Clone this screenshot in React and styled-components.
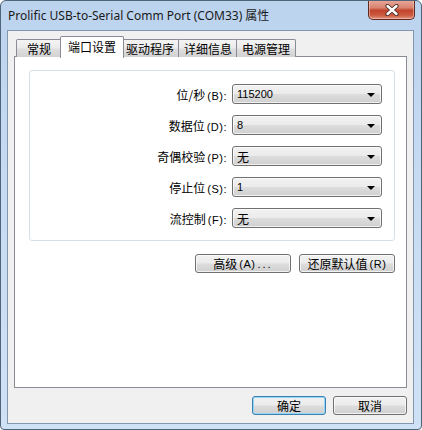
import React from 'react'
import styled, { createGlobalStyle, css } from 'styled-components'

const Global = createGlobalStyle`
  html, body {
    margin: 0;
    padding: 0;
    background: #ffffff;
    overflow: hidden;
  }
`

const cjk = `"Noto Sans CJK SC", "Noto Sans", sans-serif`

const Window = styled.div`
  width: 422px;
  height: 430px;
  box-sizing: border-box;
  border: 1px solid #4f6478;
  border-radius: 6px 6px 4px 4px;
  background: linear-gradient(180deg, #bcd3ee 0%, #c6dbf2 40%, #cfe1f5 100%);
  display: flex;
  flex-direction: column;
  overflow: hidden;
`

const TitleBar = styled.div`
  height: 29px;
  flex: none;
  display: flex;
  align-items: flex-start;
  justify-content: space-between;
  padding-left: 7px;
`

const Title = styled.div`
  font-family: "Noto Sans", ${cjk};
  font-size: 12px;
  color: #1a1a1a;
  line-height: 16px;
  margin-top: 7px;
  white-space: nowrap;
`

const CloseButton = styled.div`
  width: 47px;
  height: 20px;
  margin-top: -1px;
  margin-right: 6px;
  box-sizing: border-box;
  border: 1px solid #5e2a21;
  border-top: none;
  border-radius: 0 0 5px 5px;
  background: linear-gradient(180deg, #e9a99b 0%, #d98471 40%, #c2442d 55%, #cc5a40 80%, #e09582 100%);
  box-shadow: inset 0 0 0 1px rgba(255, 220, 210, 0.45);
  display: flex;
  align-items: center;
  justify-content: center;
`

const Client = styled.div`
  flex: 1;
  margin: 0 7px 5px 6px;
  border: 1px solid #8296ad;
  background: #f0f0f0;
  padding: 5px 6px 8px 6px;
  display: flex;
  flex-direction: column;
`

const TabStrip = styled.div`
  height: 21px;
  display: flex;
  align-items: flex-end;
  padding-left: 2px;
  position: relative;
  z-index: 1;
`

const Tab = styled.div`
  box-sizing: border-box;
  height: 18px;
  min-width: 46px;
  padding: 0 5px;
  border: 1px solid #898c95;
  border-bottom: none;
  border-radius: 2px 2px 0 0;
  background: linear-gradient(180deg, #f4f4f4 0%, #ebebeb 45%, #dedede 55%, #d2d2d2 100%);
  font-family: ${cjk};
  font-size: 12px;
  line-height: 18px;
  color: #000;
  text-align: center;
  white-space: nowrap;
  & + & {
    margin-left: -1px;
  }
  ${p => p.$active && css`
    height: 22px;
    margin: 0 -2px -1px -2px;
    padding: 0 7px;
    background: #ffffff;
    line-height: 19px;
    position: relative;
    z-index: 2;
    & + & {
      margin-left: -2px;
    }
  `}
`

const Panel = styled.div`
  box-sizing: border-box;
  height: 332px;
  margin-top: -1px;
  border: 1px solid #898c95;
  background: #ffffff;
  padding: 13px 11px 0 14px;
`

const Group = styled.div`
  box-sizing: border-box;
  height: 171px;
  border: 1px solid #d5dfe5;
  border-radius: 3px;
  padding: 13px 12px 0 0;
  display: grid;
  grid-template-columns: 1fr 150px;
  grid-auto-rows: 20px;
  row-gap: 11px;
  column-gap: 5px;
  align-items: center;
`

const Label = styled.div`
  font-family: ${cjk};
  font-size: 12px;
  color: #000;
  text-align: right;
  white-space: nowrap;
`

const Key = styled.span`
  font-family: "Liberation Sans", sans-serif;
  font-size: 11px;
  margin-left: 2px;
  letter-spacing: 0.5px;
`

const Dots = styled.span`
  font-family: "Liberation Sans", sans-serif;
  font-size: 11px;
  letter-spacing: 2px;
  margin-left: 2px;
`

const winButton = css`
  box-sizing: border-box;
  border: 1px solid #707070;
  border-radius: 3px;
  background: linear-gradient(180deg, #f2f2f2 0%, #ebebeb 48%, #dddddd 52%, #cfcfcf 100%);
  box-shadow: inset 0 0 0 1px rgba(255, 255, 255, 0.7);
`

const Combo = styled.div`
  ${winButton}
  height: 20px;
  display: flex;
  align-items: center;
  justify-content: space-between;
  padding: 0 6px 0 4px;
  font-family: ${p => (p.$cjk ? cjk : `"Liberation Sans", sans-serif`)};
  font-size: ${p => (p.$cjk ? '12px' : '11px')};
  color: #000;
`

const Arrow = styled.span`
  width: 0;
  height: 0;
  border-left: 4px solid transparent;
  border-right: 4px solid transparent;
  border-top: 4px solid #000;
  margin-top: 1px;
`

const ButtonRow = styled.div`
  display: flex;
  justify-content: flex-end;
  gap: ${p => p.$gap}px;
  margin-top: ${p => p.$top}px;
`

const Button = styled.div`
  ${winButton}
  width: ${p => p.$w}px;
  height: 19px;
  display: flex;
  align-items: center;
  justify-content: center;
  font-family: ${cjk};
  font-size: 12px;
  color: #000;
  white-space: nowrap;
  ${p => p.$focus && css`
    border-color: #3c7fb1;
    box-shadow: inset 0 0 0 1px #8fd8f7;
  `}
`

const rows = [
  { label: '位/秒', key: 'B', value: '115200' },
  { label: '数据位', key: 'D', value: '8' },
  { label: '奇偶校验', key: 'P', value: '无', cjk: true },
  { label: '停止位', key: 'S', value: '1' },
  { label: '流控制', key: 'F', value: '无', cjk: true },
]

const tabs = ['常规', '端口设置', '驱动程序', '详细信息', '电源管理']

function CloseGlyph() {
  return (
    <svg width="14" height="12" viewBox="0 0 14 12">
      <path d="M2.5 2 L11.5 10 M11.5 2 L2.5 10" stroke="#4a2a25" strokeWidth="4.2" strokeLinecap="round" />
      <path d="M2.5 2 L11.5 10 M11.5 2 L2.5 10" stroke="#ffffff" strokeWidth="2.4" strokeLinecap="round" />
    </svg>
  )
}

export default function App() {
  return (
    <>
      <Global />
      <Window>
        <TitleBar>
          <Title>Prolific USB-to-Serial Comm Port (COM33) 属性</Title>
          <CloseButton><CloseGlyph /></CloseButton>
        </TitleBar>
        <Client>
          <TabStrip>
            {tabs.map((t, i) => (
              <Tab key={t} $active={i === 1}>{t}</Tab>
            ))}
          </TabStrip>
          <Panel>
            <Group>
              {rows.map(r => (
                <React.Fragment key={r.key}>
                  <Label>{r.label}<Key>({r.key}):</Key></Label>
                  <Combo $cjk={r.cjk}>
                    <span>{r.value}</span>
                    <Arrow />
                  </Combo>
                </React.Fragment>
              ))}
            </Group>
            <ButtonRow $gap={8} $top={13}>
              <Button $w={96}>高级<Key>(A)</Key><Dots>...</Dots></Button>
              <Button $w={96}>还原默认值<Key>(R)</Key></Button>
            </ButtonRow>
          </Panel>
          <ButtonRow $gap={7} $top={8}>
            <Button $w={74} $focus>确定</Button>
            <Button $w={74}>取消</Button>
          </ButtonRow>
        </Client>
      </Window>
    </>
  )
}
